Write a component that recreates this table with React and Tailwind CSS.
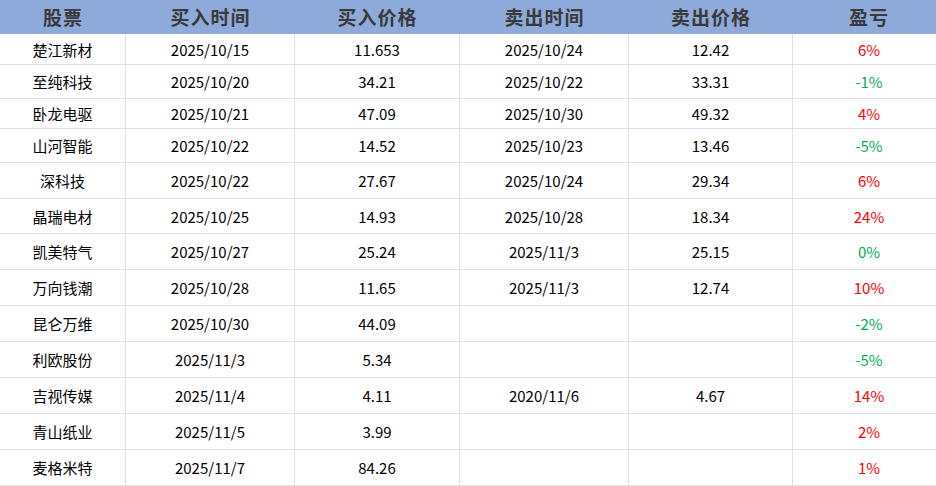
import React from "react";

const rows = [
  ["楚江新材", "2025/10/15", "11.653", "2025/10/24", "12.42", "6%", "r", "h-[31px]"],
  ["至纯科技", "2025/10/20", "34.21", "2025/10/22", "33.31", "-1%", "g", "h-[34px]"],
  ["卧龙电驱", "2025/10/21", "47.09", "2025/10/30", "49.32", "4%", "r", "h-[30px]"],
  ["山河智能", "2025/10/22", "14.52", "2025/10/23", "13.46", "-5%", "g", "h-[34px]"],
  ["深科技", "2025/10/22", "27.67", "2025/10/24", "29.34", "6%", "r", "h-[36px]"],
  ["晶瑞电材", "2025/10/25", "14.93", "2025/10/28", "18.34", "24%", "r", "h-[35px]"],
  ["凯美特气", "2025/10/27", "25.24", "2025/11/3", "25.15", "0%", "g", "h-[36px]"],
  ["万向钱潮", "2025/10/28", "11.65", "2025/11/3", "12.74", "10%", "r", "h-[36px]"],
  ["昆仑万维", "2025/10/30", "44.09", "", "", "-2%", "g", "h-[36px]"],
  ["利欧股份", "2025/11/3", "5.34", "", "", "-5%", "g", "h-[36px]"],
  ["吉视传媒", "2025/11/4", "4.11", "2020/11/6", "4.67", "14%", "r", "h-[36px]"],
  ["青山纸业", "2025/11/5", "3.99", "", "", "2%", "r", "h-[36px]"],
  ["麦格米特", "2025/11/7", "84.26", "", "", "1%", "r", "h-[36px]"],
];

const headers = ["股票", "买入时间", "买入价格", "卖出时间", "卖出价格", "盈亏"];
const grid = "grid grid-cols-[126px_169px_165px_169px_164px_152px]";

export default function App() {
  return (
    <div
      className="w-[936px] h-[486px] overflow-hidden bg-white"
      style={{ fontFamily: '"Noto Sans CJK SC", "Noto Sans", sans-serif' }}
    >
      <div className="w-[945px]">
        <div className={`${grid} h-[34px] bg-[#8eaadb]`}>
          {headers.map((h) => (
            <div
              key={h}
              className="flex items-center justify-center text-[19px] font-bold text-[#3a3a3a] tracking-[1px]"
            >
              {h}
            </div>
          ))}
        </div>
        {rows.map((r) => (
          <div key={r[0]} className={`${grid} ${r[7]} border-b border-[#e2e2e2]`}>
            {r.slice(0, 6).map((c, i) => (
              <div
                key={i}
                className={`flex items-center justify-center text-[15px] leading-none ${
                  i < 5 ? "border-r border-[#e2e2e2]" : ""
                } ${
                  i === 5
                    ? r[6] === "r"
                      ? "text-[#ff0000]"
                      : "text-[#00b050]"
                    : "text-black"
                }`}
              >
                {c}
              </div>
            ))}
          </div>
        ))}
      </div>
    </div>
  );
}
